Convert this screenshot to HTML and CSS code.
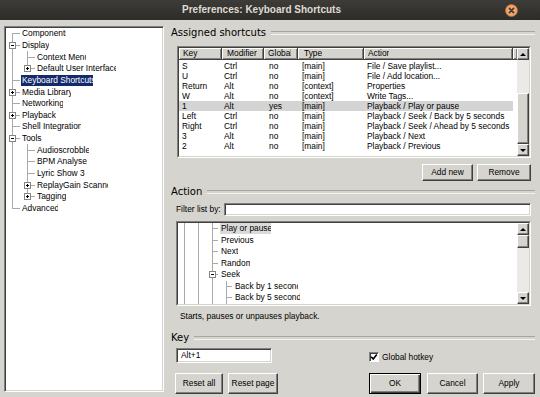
FILE: index.html
```html
<!DOCTYPE html>
<html lang="en">
<head>
<meta charset="utf-8">
<title>Preferences: Keyboard Shortcuts</title>
<link rel="stylesheet" href="styles.css">
</head>
<body>
<div class="window">
  <header class="titlebar">
    <span class="title">Preferences: Keyboard Shortcuts</span>
    <span class="close"><svg width="13" height="13" viewBox="0 0 13 13"><circle cx="6.5" cy="6.5" r="6" fill="#f0a46c" stroke="#b86a38" stroke-width="0.8"/><path d="M4.4 4.4L8.6 8.6M8.6 4.4L4.4 8.6" stroke="#3c3b37" stroke-width="1.6" stroke-linecap="round"/></svg></span>
  </header>
  <div class="main">
    <div class="nav">
      <div class="node"><i class="g first"></i><span class="lbl w45">Components</span></div>
      <div class="node"><i class="g tee"><b class="box minus"></b></i><span class="lbl">Display</span></div>
      <div class="node"><i class="g pass"></i><i class="g tee"></i><span class="lbl w50">Context Menu</span></div>
      <div class="node"><i class="g pass"></i><i class="g end"><b class="box plus"></b></i><span class="lbl w80">Default User Interface</span></div>
      <div class="node"><i class="g tee"></i><span class="lbl w72 sel">Keyboard Shortcuts</span></div>
      <div class="node"><i class="g tee"><b class="box plus"></b></i><span class="lbl w50">Media Library</span></div>
      <div class="node"><i class="g tee"></i><span class="lbl w42">Networking</span></div>
      <div class="node"><i class="g tee"><b class="box plus"></b></i><span class="lbl">Playback</span></div>
      <div class="node"><i class="g tee"></i><span class="lbl w60">Shell Integration</span></div>
      <div class="node"><i class="g tee"><b class="box minus"></b></i><span class="lbl">Tools</span></div>
      <div class="node"><i class="g pass"></i><i class="g tee"></i><span class="lbl w53">Audioscrobbler</span></div>
      <div class="node"><i class="g pass"></i><i class="g tee"></i><span class="lbl w51">BPM Analyser</span></div>
      <div class="node"><i class="g pass"></i><i class="g tee"></i><span class="lbl">Lyric Show 3</span></div>
      <div class="node"><i class="g pass"></i><i class="g tee"><b class="box plus"></b></i><span class="lbl w72">ReplayGain Scanner</span></div>
      <div class="node"><i class="g pass"></i><i class="g end"><b class="box plus"></b></i><span class="lbl w30">Tagging</span></div>
      <div class="node"><i class="g end"></i><span class="lbl w37">Advanced</span></div>
    </div>

    <div class="page">
      <div class="group">Assigned shortcuts</div>

      <div class="list">
        <div class="frame">
          <div class="list-main">
            <div class="list-head">
              <div class="hcell">Key</div>
              <div class="hcell">Modifier</div>
              <div class="hcell"><span class="clip w23">Global</span></div>
              <div class="hcell">Type</div>
              <div class="hcell"><span class="clip w21">Action</span></div>
              <div class="hcell"></div>
            </div>
            <div class="rows">
              <div class="row"><span>S</span><span>Ctrl</span><span>no</span><span>[main]</span><span>File / Save playlist...</span></div>
              <div class="row"><span>U</span><span>Ctrl</span><span>no</span><span>[main]</span><span>File / Add location...</span></div>
              <div class="row"><span>Return</span><span>Alt</span><span>no</span><span>[context]</span><span>Properties</span></div>
              <div class="row"><span>W</span><span>Alt</span><span>no</span><span>[context]</span><span>Write Tags...</span></div>
              <div class="row current"><span>1</span><span>Alt</span><span>yes</span><span>[main]</span><span>Playback / Play or pause</span></div>
              <div class="row"><span>Left</span><span>Ctrl</span><span>no</span><span>[main]</span><span>Playback / Seek / Back by 5 seconds</span></div>
              <div class="row"><span>Right</span><span>Ctrl</span><span>no</span><span>[main]</span><span>Playback / Seek / Ahead by 5 seconds</span></div>
              <div class="row"><span>3</span><span>Alt</span><span>no</span><span>[main]</span><span>Playback / Next</span></div>
              <div class="row"><span>2</span><span>Alt</span><span>no</span><span>[main]</span><span>Playback / Previous</span></div>
            </div>
          </div>
          <div class="vscroll">
            <div class="sb-btn"><i class="arrow up"></i></div>
            <div class="sb-space s-list"></div>
            <div class="sb-thumb t-list"></div>
            <div class="sb-fill"></div>
            <div class="sb-btn"><i class="arrow down"></i></div>
          </div>
        </div>
      </div>

      <div class="btnrow">
        <div class="btn b-add">Add new</div>
        <div class="btn b-remove">Remove</div>
      </div>

      <div class="group g-action">Action</div>

      <div class="filter">
        <span class="filter-label">Filter list by:</span>
        <div class="field filter-input"></div>
      </div>

      <div class="atree">
        <div class="frame">
          <div class="atree-main">
            <div class="node anode"><i class="g pass"></i><i class="g pass"></i><i class="g tee"></i><span class="lbl hl w51">Play or pause</span></div>
            <div class="node anode"><i class="g pass"></i><i class="g pass"></i><i class="g tee"></i><span class="lbl">Previous</span></div>
            <div class="node anode"><i class="g pass"></i><i class="g pass"></i><i class="g tee"></i><span class="lbl">Next</span></div>
            <div class="node anode"><i class="g pass"></i><i class="g pass"></i><i class="g tee"></i><span class="lbl w30">Random</span></div>
            <div class="node anode"><i class="g pass"></i><i class="g pass"></i><i class="g tee"><b class="box minus"></b></i><span class="lbl">Seek</span></div>
            <div class="node anode"><i class="g pass"></i><i class="g pass"></i><i class="g pass"></i><i class="g tee"></i><span class="lbl w64">Back by 1 second</span></div>
            <div class="node anode"><i class="g pass"></i><i class="g pass"></i><i class="g pass"></i><i class="g tee"></i><span class="lbl w66">Back by 5 seconds</span></div>
          </div>
          <div class="vscroll">
            <div class="sb-btn"><i class="arrow up"></i></div>
            <div class="sb-thumb t-tree"></div>
            <div class="sb-fill"></div>
            <div class="sb-btn"><i class="arrow down"></i></div>
          </div>
        </div>
      </div>

      <div class="desc">Starts, pauses or unpauses playback.</div>

      <div class="group g-key">Key</div>

      <div class="keyrow">
        <div class="field key-input">Alt+1</div>
        <div class="check"><svg width="8" height="8" viewBox="0 0 8 8"><path d="M1.2 3.8L3.2 6L6.8 1.4" fill="none" stroke="#000" stroke-width="1.6"/></svg></div>
        <span class="check-label">Global hotkey</span>
      </div>

      <div class="bottom">
        <div class="btn b-resetall">Reset all</div>
        <div class="btn b-resetpage">Reset page</div>
        <div class="spacer"></div>
        <div class="btn b-ok default">OK</div>
        <div class="btn b-cancel">Cancel</div>
        <div class="btn b-apply">Apply</div>
      </div>
    </div>
  </div>
</div>
</body>
</html>
```

FILE: styles.css
```css
* { box-sizing: border-box; margin: 0; padding: 0; }
html, body { width: 540px; height: 397px; overflow: hidden; }
body {
  background: #d6d4ce;
  font-family: "Liberation Sans", Arial, sans-serif;
  font-size: 8.4px;
  color: #000;
  line-height: 1;
}
i, b { font-style: normal; display: block; }

.window { display: flex; flex-direction: column; height: 397px; }

/* title bar */
.titlebar {
  flex: none;
  height: 20px;
  display: flex;
  align-items: center;
  padding: 0 22px 0 18px;
  background: linear-gradient(#3d3c38, #2d2c29);
}
.title {
  flex: 1;
  text-align: center;
  color: #dfdbd2;
  font-weight: bold;
  font-size: 10px;
}
.close { width: 13px; height: 13px; display: flex; }

.main { flex: 1; display: flex; padding-top: 6px; min-height: 0; }

/* left tree */
.nav {
  flex: none;
  margin-left: 4px;
  width: 160px;
  height: 366px;
  background: #fff;
  border: 1px solid;
  border-color: #808080 #fff #fff #808080;
  box-shadow: inset 1px 1px #404040, inset -1px -1px #d6d4ce;
  padding: 1px;
  --c: 8px;
}
.node { display: flex; height: 11.65px; }
.anode { height: 11.5px; }
.lbl {
  display: block;
  white-space: nowrap;
  overflow: hidden;
  padding-left: 1px;
  line-height: 11px;
  height: 11px;
  align-self: center;
  flex: none;
}
.sel { background: #12296a; color: #fff; }
.hl { background: #dadada; }

.w21 { width: 21px; } .w23 { width: 23px; } .w30 { width: 30px; }
.w37 { width: 37px; } .w42 { width: 42px; } .w45 { width: 45px; }
.w50 { width: 50px; } .w51 { width: 51px; } .w53 { width: 53px; }
.w60 { width: 60px; } .w64 { width: 64px; } .w66 { width: 66px; }
.w72 { width: 72px; } .w80 { width: 80px; }
.clip { display: block; overflow: hidden; white-space: nowrap; }

/* tree guides */
.g {
  flex: none;
  width: 15px;
  display: flex;
  align-items: center;
  background-repeat: no-repeat;
}
.atree .g { width: 14px; }
.pass {
  background-image: linear-gradient(#a9a9a9, #a9a9a9);
  background-size: 1px 100%;
  background-position: 6px 0;
}
.tee, .end, .first {
  background-image: linear-gradient(#a9a9a9, #a9a9a9), linear-gradient(#a9a9a9, #a9a9a9);
}
.tee { background-size: 1px 100%, var(--c) 1px; background-position: 6px 0, 6px 50%; }
.end { background-size: 1px 50%, var(--c) 1px; background-position: 6px 0, 6px 50%; }
.first { background-size: 1px 50%, var(--c) 1px; background-position: 6px 100%, 6px 50%; }
.box {
  width: 7px;
  height: 7px;
  margin-left: 3px;
  border: 1px solid #858585;
}
.minus { background: linear-gradient(#000, #000) center / 3px 1px no-repeat, #fff; }
.plus {
  background: linear-gradient(#000, #000) center / 3px 1px no-repeat,
              linear-gradient(#000, #000) center / 1px 3px no-repeat, #fff;
}

/* right page */
.page {
  flex: 1;
  min-width: 0;
  display: flex;
  flex-direction: column;
  padding: 0 5px 0 7px;
}
.group {
  flex: none;
  display: flex;
  align-items: center;
  height: 14px;
  font-family: "DejaVu Sans", sans-serif;
  font-size: 10px;
}
.group::after {
  content: "";
  flex: 1;
  height: 2px;
  margin-left: 5px;
  border-top: 1px solid #a8a6a0;
  border-bottom: 1px solid #f4f3f0;
}
.g-action { margin-top: 4px; }
.g-key { margin-top: 10px; }

.frame {
  height: 100%;
  display: flex;
  background: #fff;
  border: 1px solid;
  border-color: #404040 #d6d4ce #d6d4ce #404040;
}

/* shortcut list */
.list {
  flex: none;
  height: 112px;
  margin: 6px 4px 0 6px;
  border: 1px solid;
  border-color: #808080 #fff #fff #808080;
}
.list-main { flex: 1; min-width: 0; overflow: hidden; }
.list-head {
  display: grid;
  grid-template-columns: 43px 42px 34px 66px 149px 1fr;
  height: 12px;
}
.hcell {
  background: #d6d4ce;
  border-right: 1px solid #404040;
  border-bottom: 1px solid #404040;
  box-shadow: inset 1px 1px #fff, inset -1px -1px #808080;
  padding-left: 4px;
  line-height: 11px;
  white-space: nowrap;
  overflow: hidden;
}
.hcell:nth-child(2) { padding-left: 5px; }
.hcell:nth-child(4) { padding-left: 6px; }
.rows { padding-top: 1px; }
.row {
  display: grid;
  grid-template-columns: 43px 42px 34px 66px 149px;
  width: 334px;
  height: 10px;
  line-height: 10px;
}
.row span { white-space: nowrap; overflow: hidden; padding-left: 3px; }
.row span:nth-child(2) { padding-left: 2px; }
.row span:nth-child(3) { padding-left: 5px; }
.row span:nth-child(4) { padding-left: 4px; }
.row.current { background: #d4d4d4; }

/* scrollbars */
.vscroll {
  flex: none;
  width: 12px;
  display: flex;
  flex-direction: column;
  background: #ebeae6;
}
.sb-btn, .sb-thumb {
  flex: none;
  background: #d6d4ce;
  border: 1px solid;
  border-color: #fff #404040 #404040 #fff;
  box-shadow: inset -1px -1px #808080;
}
.sb-btn { height: 12px; display: flex; align-items: center; justify-content: center; }
.sb-fill { flex: 1; }
.s-list { flex: none; height: 33px; }
.t-list { height: 51px; }
.t-tree { height: 13px; }
.arrow { width: 0; height: 0; border-left: 3px solid transparent; border-right: 3px solid transparent; }
.up { border-bottom: 3px solid #000; }
.down { border-top: 3px solid #000; }

/* buttons */
.btn {
  flex: none;
  display: flex;
  align-items: center;
  justify-content: center;
  background: #d6d4ce;
  border: 1px solid;
  border-color: #fff #404040 #404040 #fff;
  box-shadow: inset -1px -1px #808080;
  white-space: nowrap;
}
.btnrow {
  flex: none;
  display: flex;
  justify-content: flex-end;
  gap: 4px;
  height: 17px;
  margin: 6px 4px 0 0;
}
.b-add { width: 51px; }
.b-remove { width: 54px; }

/* filter */
.filter {
  flex: none;
  display: flex;
  align-items: center;
  height: 13px;
  margin: 4px 4px 0 5px;
}
.filter-label { width: 48px; flex: none; }
.field {
  background: #fff;
  border: 1px solid;
  border-color: #808080 #fff #fff #808080;
  box-shadow: inset 1px 1px #404040, inset -1px -1px #d6d4ce;
}
.filter-input { flex: 1; height: 13px; }

/* action tree */
.atree {
  flex: none;
  height: 85px;
  margin: 5px 4px 0 5px;
  border: 1px solid;
  border-color: #808080 #fff #fff #808080;
  --c: 6px;
}
.atree-main { flex: 1; min-width: 0; overflow: hidden; }

.desc {
  flex: none;
  margin-top: 5px;
  padding-left: 9px;
  height: 10px;
  line-height: 10px;
}

/* key row */
.keyrow {
  flex: none;
  display: flex;
  align-items: center;
  height: 15px;
  margin: 3px 0 0 5px;
}
.key-input {
  width: 96px;
  height: 15px;
  padding-left: 4px;
  line-height: 13px;
}
.check {
  margin-left: 97px;
  margin-top: 3px;
  width: 10px;
  height: 10px;
  background: #fff;
  border: 1px solid;
  border-color: #808080 #fff #fff #808080;
  box-shadow: inset 1px 1px #404040;
  display: flex;
  align-items: center;
  justify-content: center;
}
.check-label { margin-left: 3px; margin-top: 3px; }

/* bottom buttons */
.bottom {
  flex: none;
  display: flex;
  height: 21px;
  margin-top: 10px;
}
.spacer { flex: 1; }
.b-resetall { width: 48px; margin-left: 4px; }
.b-resetpage { width: 50px; margin-left: 5px; }
.b-ok { width: 52px; }
.b-cancel { width: 51px; margin-left: 6px; }
.b-apply { width: 52px; margin-left: 5px; }
.default {
  border-color: #000;
  box-shadow: inset 1px 1px #fff, inset -1px -1px #404040, inset -2px -2px #808080;
}
```
